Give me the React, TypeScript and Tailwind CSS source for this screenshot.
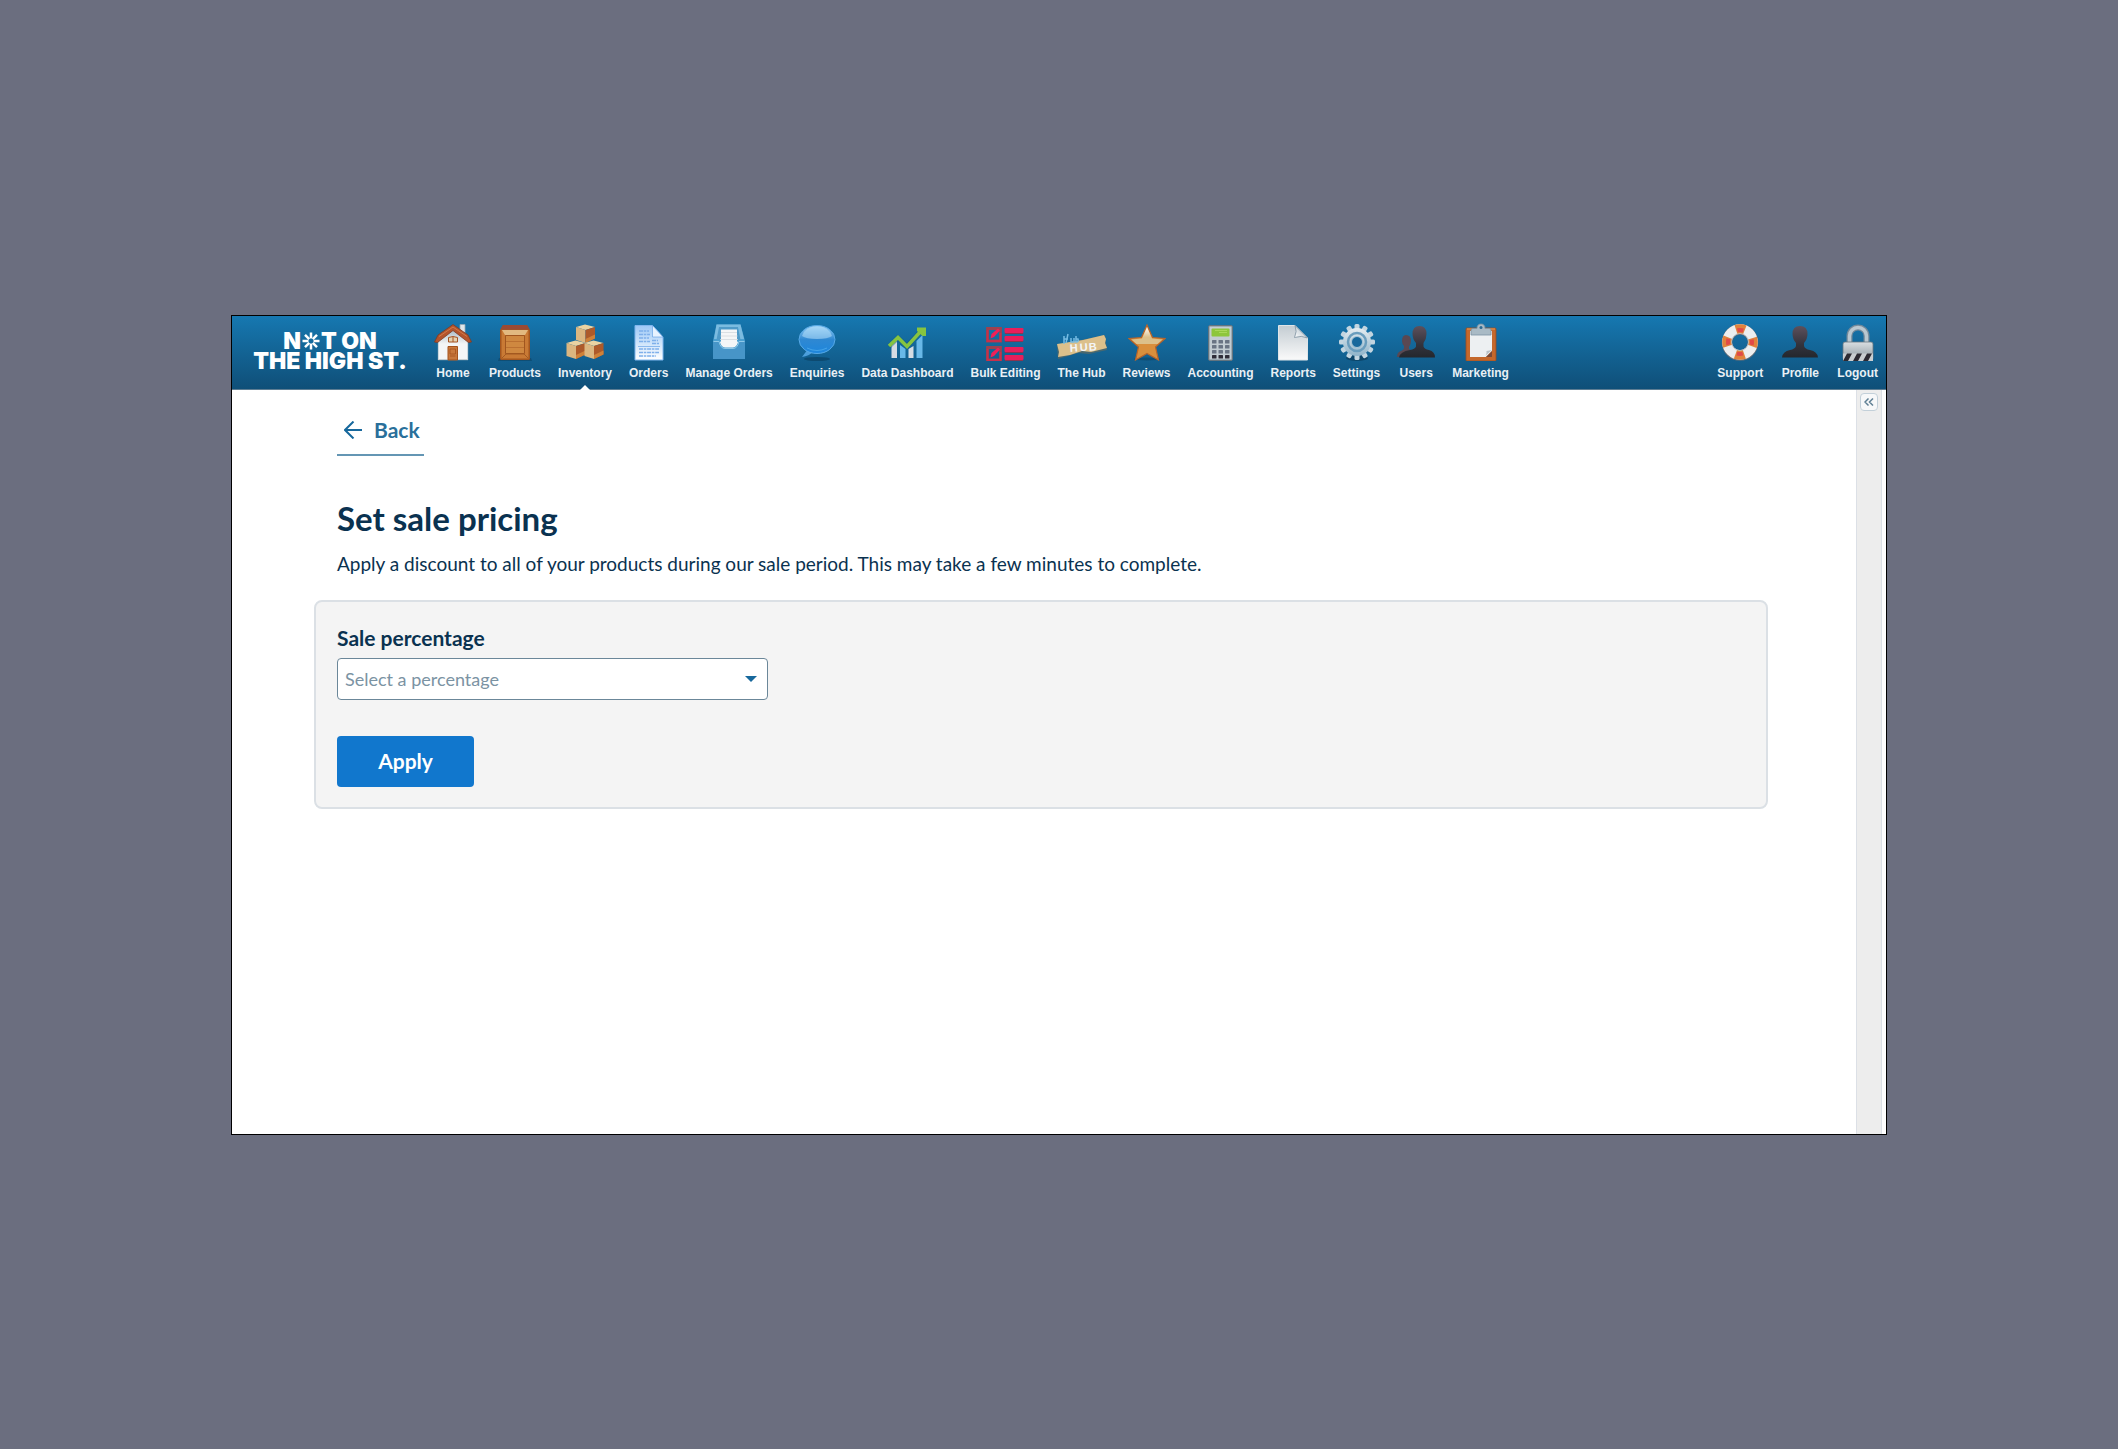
import React from 'react';

const HomeIcon = () => (
  <svg viewBox="0 0 38 38" className="h-[38px] w-[38px]">
    <defs>
      <linearGradient id="home-wall" x1="0" y1="0" x2="0" y2="1">
        <stop offset="0" stopColor="#9fb2be" />
        <stop offset="0.5" stopColor="#f4f6f7" />
      </linearGradient>
    </defs>
    <path d="M26 1.500h5v10h-5z" fill="#dfe6ea" stroke="#93a7b4" strokeWidth="0.800" />
    <path d="M4 17 19 5l15 12v20H4z" fill="url(#home-wall)" stroke="#6f93a8" strokeWidth="0.600" />
    <path d="M.5 19 4 12 19 1.500 34 12l3.500 7-3 .5L19 7.500 3.500 19.500z" fill="#b4542c" stroke="#7e3a22" strokeWidth="0.800" />
    <path d="M5 13.500 19 4l14 9.500" fill="none" stroke="#d07a4a" />
    <path d="M14.500 14.500q4.500-2 9 0V19h-9z" fill="#e4d2b0" stroke="#a65222" />
    <path d="M19 14v5" stroke="#a65222" />
    <path d="M14 23.500h9.500V37H14z" fill="#c8783c" stroke="#a4521c" />
    <path d="M16 26h5.500v5H16zM16 33h5.500" fill="none" stroke="#a4521c" strokeWidth="0.800" />
    <path d="M4 36.500h9M25 36.500h9" stroke="#c6ced2" />
  </svg>
);

const ProductsIcon = () => (
  <svg viewBox="0 0 38 38" className="h-[38px] w-[38px]">
    <path d="M3 35h32l1 3H2z" fill="#0c3d5c" opacity="0.500" />
    <path d="M7 2h24l3 5v28.500q0 1.500-1.500 1.500h-27Q4 37 4 35.500V7z" fill="#a4561f" />
    <path d="M7 2h24l2.500 4.500h-29z" fill="#9a4a34" />
    <path d="M5.500 7h27v28.500h-27z" fill="#c97a35" />
    <path d="M6 7h26l-3 5H9z" fill="#e2b980" />
    <path d="M9.500 12.500h19v18h-19z" fill="#cf8840" stroke="#a0561f" />
    <path d="M10 18.500h18M10 24.500h18" stroke="#bb7031" />
    <path d="M6 35l4-4h18l4 4" fill="none" stroke="#a45a22" />
  </svg>
);

const Box = ({ x, y }: { x: number; y: number }) => (
  <g transform={`translate(${x} ${y})`}>
    <path d="M0 2.500 9 0l10 2.500L9.500 5.500z" fill="#ead3a2" />
    <path d="M0 2.500 9.500 5.500v13L0 15.500z" fill="#dbb680" />
    <path d="M9.500 5.500 19 2.500V14l-9.500 4.500z" fill="#ad5a2a" />
    <path d="M9.500 14.500 19 10v4l-9.500 4.500z" fill="#cf8138" />
  </g>
);

const InventoryIcon = () => (
  <svg viewBox="0 0 38 38" className="h-[38px] w-[38px]">
    <Box x={10} y={1.500} />
    <Box x={0.500} y={17.500} />
    <Box x={18.500} y={17.500} />
  </svg>
);

const OrdersIcon = () => (
  <svg viewBox="0 0 38 38" className="h-[38px] w-[38px]">
    <defs>
      <linearGradient id="orders-page" x1="0" y1="0" x2="0" y2="1">
        <stop offset="0" stopColor="#9cc8f6" />
        <stop offset="1" stopColor="#ffffff" />
      </linearGradient>
    </defs>
    <path d="M5 2.500h17.500L33 14v23H5z" fill="url(#orders-page)" stroke="#7fb6ee" />
    <path d="M22.500 2.500 33 14H22.500z" fill="#e8f3ff" stroke="#5a9be0" strokeWidth="0.600" />
    <path
      d="M9 8h10M9 11.500h11M9 15h10m3 2.500h6M9 18.500h11m2 2h7M9 26h20M9 29.500h20M9 33h17"
      stroke="#7fb0ea"
      strokeWidth="1.600"
      strokeDasharray="4 0.800 2.500 0.800"
    />
    <path d="M8 23.500h22" stroke="#8bb9ee" />
  </svg>
);

const ManageOrdersIcon = () => (
  <svg viewBox="0 0 38 38" className="h-[38px] w-[38px]">
    <path d="M6.500 1.500h24L35 18v18H3V18z" fill="#4a9fd0" />
    <path d="M6.500 1.500h24L34 16H4z" fill="#7bbbe0" />
    <path d="M9 4h19l2.500 13h-24z" fill="#4f9ac8" />
    <path d="M11 6.500h16V18l1 1.500q-2 5-5 5h-8q-3 0-5-5l1-1.500z" fill="#f5f6f7" />
    <path d="M11 9.500h16M10.500 13h17M10 16.500h18" stroke="#d3d9dd" strokeWidth="0.800" />
    <path d="M3 18h6q1.500 7 6 7h8q4.500 0 6-7h6v18H3z" fill="#4795c8" />
    <path d="M3.500 18.500H9q1.500 7 6 7h8q4.500 0 6-7h5.500" fill="none" stroke="#8fc8e8" />
  </svg>
);

const EnquiriesIcon = () => (
  <svg viewBox="0 0 38 38" className="h-[38px] w-[38px]">
    <defs>
      <linearGradient id="enq-bubble" x1="0" y1="0" x2="0" y2="1">
        <stop offset="0" stopColor="#9ad2f6" />
        <stop offset="0.500" stopColor="#2f88d2" />
        <stop offset="1" stopColor="#1d86dc" />
      </linearGradient>
    </defs>
    <ellipse cx="19" cy="36" rx="13" ry="2" fill="#0b4164" opacity="0.700" />
    <path d="M10 26 4 34q7-1 11-5z" fill="#4c9fdc" />
    <ellipse cx="19" cy="16.500" rx="18" ry="14" fill="url(#enq-bubble)" stroke="#57a9e6" />
    <path d="M4 13q3-9.500 15-9.500T34 13q-4 3-15 3T4 13z" fill="#b4defa" opacity="0.550" />
    <path d="M9 25q10 5 20 0" fill="none" stroke="#45a4e8" />
  </svg>
);

const DashboardIcon = () => (
  <svg viewBox="0 0 38 38" className="h-[38px] w-[38px]">
    <path d="M3.500 23 9 18v17H3.500zM20.500 26l5-3v12h-5z" fill="#d5dce3" />
    <path d="M12 22l5.500 4v9H12zM28.500 18l6-6v23h-6z" fill="#68b8e8" />
    <path d="M1 23.500 10 15l9 8L32 9" fill="none" stroke="#0e4f7a" strokeWidth="5" opacity="0.300" />
    <path d="M1 23 10 14.500l9 9L33 8" fill="none" stroke="#86c440" strokeWidth="3.500" />
    <path d="M29 4.500h9V13h-3.500L29 8z" fill="#86c440" />
  </svg>
);

const BulkEditingIcon = () => (
  <svg viewBox="0 0 38 38" className="h-[38px] w-[38px]">
    {[4, 23].map((y) => (
      <g key={y} transform={`translate(0 ${y})`}>
        <path d="M1.500 1.500h13V14h-13z" fill="none" stroke="#9c4250" strokeWidth="2.800" />
        <path d="M1.500 3V14h13V6" fill="none" stroke="#c8304c" strokeWidth="1.800" />
        <path d="m4.500 11.500 1-4.500L12 1.500l2 2L8 10z" fill="#f02058" />
        <rect x="18.500" y="1" width="19" height="5" rx="1" fill="#e81e5b" />
        <rect x="18.500" y="9" width="19" height="5" rx="1" fill="#e81e5b" />
        <path d="M19 6.500h18M19 14.500h18" stroke="#8b3450" />
      </g>
    ))}
  </svg>
);

const HubIcon = () => (
  <svg viewBox="0 0 51 38" className="-mx-2 h-[38px] w-[51px]">
    <path d="M1 22 49 12l2 15-18 4-11-1-20 6z" fill="#6c6a58" opacity="0.600" />
    <path d="M1 21 27 17l21-5 2 4-1 4 2 5-16 4-9-1-12 4-12 2 1-5z" fill="#dcc08b" />
    <text
      x="14"
      y="29"
      fontSize="11"
      fontWeight="700"
      fill="#f4f6f8"
      transform="rotate(-4 14 29)"
      fontFamily="Liberation Sans, sans-serif"
    >
      <tspan x="14">H</tspan>
      <tspan x="24">U</tspan>
      <tspan x="33">B</tspan>
    </text>
    <path d="M8 13v8M12 11l-2 9m-2-4h4M15 15v4h3v-4M20 13v6q3 0 2-3h-2" fill="none" stroke="#75bce4" strokeWidth="1.500" />
  </svg>
);

const ReviewsIcon = () => (
  <svg viewBox="0 0 38 38" className="h-[38px] w-[38px]">
    <defs>
      <linearGradient id="star-shine" x1="0" y1="0" x2="0" y2="1">
        <stop offset="0" stopColor="#ffffff" />
        <stop offset="0.600" stopColor="#dcc08a" />
      </linearGradient>
    </defs>
    <ellipse cx="19" cy="36" rx="13" ry="1.500" fill="#0b3d5c" opacity="0.500" />
    <path
      d="m19 2 5.500 12.500L37 15.500 27.500 24l3 13L19 30.500 7.500 37l3-13L1 15.500l12.500-1z"
      fill="#d98f3c"
      stroke="#b8642a"
      strokeWidth="1.200"
    />
    <path d="m19 4 5 11.500 10.500 1-5 4.500h-21l-5-4.500 10.500-1z" fill="url(#star-shine)" />
  </svg>
);

const AccountingIcon = () => (
  <svg viewBox="0 0 38 38" className="h-[38px] w-[38px]">
    <rect x="6.500" y="2.500" width="24" height="35" rx="1.500" fill="#9eabb3" stroke="#63747f" />
    <rect x="8" y="4" width="21" height="32" fill="#c3ccd2" />
    <rect x="9.500" y="5.500" width="18" height="8" rx="1" fill="#8dc63c" />
    <path d="M13 7.500h12M17 9.500h8" stroke="#a9d85a" />
    {[17, 22, 27, 32].map((y) => (
      <g key={y} fill={y === 32 ? '#2f2c38' : '#6a7484'}>
        <rect x="10" y={y} width="4.500" height="3.500" rx="0.500" />
        <rect x="16.500" y={y} width="4.500" height="3.500" rx="0.500" />
        <rect x="23" y={y} width="4.500" height="3.500" rx="0.500" />
      </g>
    ))}
  </svg>
);

const ReportsIcon = () => (
  <svg viewBox="0 0 38 38" className="h-[38px] w-[38px]">
    <defs>
      <linearGradient id="report-page" x1="0" y1="0" x2="0" y2="1">
        <stop offset="0" stopColor="#c3ccd2" />
        <stop offset="1" stopColor="#fafafa" />
      </linearGradient>
      <linearGradient id="report-fold" x1="0" y1="1" x2="1" y2="0">
        <stop offset="0" stopColor="#ffffff" />
        <stop offset="1" stopColor="#9fb0bb" />
      </linearGradient>
    </defs>
    <path d="M4.500 2.500H21L33.500 15v22h-29z" fill="url(#report-page)" stroke="#dfe5e8" />
    <path d="M21 2.500q2.500 6-.5 12 7-2.500 13 .5z" fill="url(#report-fold)" stroke="#74899a" strokeWidth="0.700" />
  </svg>
);

const SettingsIcon = () => (
  <svg viewBox="0 0 38 38" className="h-[38px] w-[38px]">
    <defs>
      <linearGradient id="gear-metal" x1="0" y1="0" x2="0" y2="1">
        <stop offset="0" stopColor="#e6edf1" />
        <stop offset="1" stopColor="#8fb3c9" />
      </linearGradient>
    </defs>
    <ellipse cx="19" cy="35" rx="11" ry="3" fill="#0a3552" opacity="0.600" />
    {[0, 30, 60, 90, 120, 150].map((deg) => (
      <rect key={deg} x="16.500" y="1" width="5" height="36" rx="1.500" fill="#c3d5e0" transform={`rotate(${deg} 19 19)`} />
    ))}
    <circle cx="19" cy="19" r="14" fill="url(#gear-metal)" />
    <circle cx="19" cy="19" r="9" fill="none" stroke="#6a9dbd" strokeWidth="2.500" />
    <circle cx="19" cy="19" r="5.500" fill="#17689c" stroke="#a9c7d8" />
  </svg>
);

const ProfileIcon = () => (
  <svg viewBox="0 0 38 38" className="h-[38px] w-[38px]">
    <defs>
      <linearGradient id="person-dark" x1="0" y1="0" x2="0" y2="1">
        <stop offset="0" stopColor="#5d505c" />
        <stop offset="0.600" stopColor="#33333c" />
        <stop offset="1" stopColor="#24272d" />
      </linearGradient>
    </defs>
    <path
      d="M19 3q7.500 0 7.500 8 0 5-3.500 9v3q1 3 6 4 7.500 1.500 8 7.500H1Q1.500 28.500 9 27q5-1 6-4v-3q-3.500-4-3.500-9Q11.500 3 19 3z"
      fill="url(#person-dark)"
    />
  </svg>
);

const UsersIcon = () => (
  <svg viewBox="0 0 38 38" className="h-[38px] w-[38px]">
    <defs>
      <linearGradient id="users-dark" x1="0" y1="0" x2="0" y2="1">
        <stop offset="0" stopColor="#5d505c" />
        <stop offset="0.600" stopColor="#33333c" />
        <stop offset="1" stopColor="#24272d" />
      </linearGradient>
    </defs>
    <path d="M9 12q5 0 5 6 0 3-2 6v2q2 2 6 2v6H0q0-5 4-6 3-1 3-3v-2q-2-2-2-5 0-6 4-6z" fill="#5a4852" />
    <path
      d="M22.500 3q7 0 7 8 0 5-3 9v3.500q1 2.500 5.500 3.500 6 1.500 6 7.500H2Q3 28.500 13 27q5-1 6-3.500V20q-3.500-4-3.500-9 0-8 7-8z"
      fill="url(#users-dark)"
    />
  </svg>
);

const MarketingIcon = () => (
  <svg viewBox="0 0 38 38" className="h-[38px] w-[38px]">
    <rect x="4" y="5" width="30" height="33" rx="1" fill="#c4682c" stroke="#9a4b20" strokeWidth="0.800" />
    <path d="M5 6h28" stroke="#e29a58" />
    <path d="M8 8h22v20l-6 6H8z" fill="#edf0f2" />
    <path d="m30 27-8 7q3-2 2.500-6z" fill="#b9c1c6" />
    <path d="M30 28v6h-6z" fill="#7a4a38" />
    <path d="M9 12V7q0-1.500 2-1.500h4Q15 1 19 1t4 4.500h4q2 0 2 1.500v5z" fill="#a9bac5" stroke="#7c93a3" strokeWidth="0.800" />
    <circle cx="19" cy="4.500" r="1.500" fill="#2a6a94" />
  </svg>
);

const SupportIcon = () => (
  <svg viewBox="0 0 38 38" className="h-[38px] w-[38px]">
    <circle cx="19" cy="19.500" r="13" fill="none" stroke="#5f6c78" strokeWidth="10.500" />
    <circle cx="19" cy="19" r="13" fill="none" stroke="#eceeef" strokeWidth="9.500" />
    <circle
      cx="19"
      cy="19"
      r="13"
      fill="none"
      stroke="#e0823c"
      strokeWidth="9.500"
      strokeDasharray="9 11.420"
      strokeDashoffset="4.500"
    />
    <circle
      cx="19"
      cy="19"
      r="12"
      fill="none"
      stroke="#e04a48"
      strokeWidth="4"
      strokeDasharray="6 12.850"
      strokeDashoffset="3"
    />
    <circle cx="19" cy="19" r="8.500" fill="none" stroke="#b9bfc4" strokeWidth="0.800" />
  </svg>
);

const LogoutIcon = () => (
  <svg viewBox="0 0 38 38" className="h-[38px] w-[38px]">
    <defs>
      <linearGradient id="lock-body" x1="0" y1="0" x2="0" y2="1">
        <stop offset="0" stopColor="#d9dee1" />
        <stop offset="1" stopColor="#8f9ba3" />
      </linearGradient>
    </defs>
    <path d="M10.500 21v-8a8.500 8.500 0 0 1 17 0v8" fill="none" stroke="#73899a" strokeWidth="6" />
    <path d="M10.500 21v-8a8.500 8.500 0 0 1 17 0v8" fill="none" stroke="#b9c7d0" strokeWidth="3.500" />
    <rect x="4" y="19" width="30" height="18" rx="2" fill="url(#lock-body)" stroke="#687680" strokeWidth="0.800" />
    <path d="M4 30.500h30V38H4z" fill="#c9cdd0" />
    <path d="m4 38 4-7.500h5L9 38zM14 38l4-7.500h5L19 38zM24 38l4-7.500h5L29 38z" fill="#2d2b33" />
  </svg>
);

const mainNav = [
  { label: 'Home', Icon: HomeIcon },
  { label: 'Products', Icon: ProductsIcon },
  { label: 'Inventory', Icon: InventoryIcon, active: true },
  { label: 'Orders', Icon: OrdersIcon },
  { label: 'Manage Orders', Icon: ManageOrdersIcon },
  { label: 'Enquiries', Icon: EnquiriesIcon },
  { label: 'Data Dashboard', Icon: DashboardIcon },
  { label: 'Bulk Editing', Icon: BulkEditingIcon },
  { label: 'The Hub', Icon: HubIcon },
  { label: 'Reviews', Icon: ReviewsIcon },
  { label: 'Accounting', Icon: AccountingIcon },
  { label: 'Reports', Icon: ReportsIcon },
  { label: 'Settings', Icon: SettingsIcon },
  { label: 'Users', Icon: UsersIcon },
  { label: 'Marketing', Icon: MarketingIcon },
];

const accountNav = [
  { label: 'Support', Icon: SupportIcon },
  { label: 'Profile', Icon: ProfileIcon },
  { label: 'Logout', Icon: LogoutIcon },
];

interface NavItemProps {
  label: string;
  Icon: React.FC;
  active?: boolean;
}

const NavItem: React.FC<NavItemProps> = ({ label, Icon, active }) => (
  <a
    href="#"
    aria-current={active ? 'page' : undefined}
    className="relative flex min-w-9 flex-col items-center gap-1 pt-[7px] pb-2 font-['Liberation_Sans',Arial,sans-serif] text-xs leading-4 font-bold whitespace-nowrap text-[#e9f0f5]"
  >
    <Icon />
    {label}
    {active && (
      <svg viewBox="0 0 10 5" className="absolute -bottom-px left-1/2 h-[5px] w-2.5 -translate-x-1/2">
        <path d="M0 5 5 0l5 5z" fill="#ffffff" />
      </svg>
    )}
  </a>
);

const Logo = () => (
  <a
    href="#"
    aria-label="Not on the high street"
    className="flex w-[152px] flex-col items-center pt-[15px] font-['Inter',sans-serif] text-[23px] leading-5 font-black whitespace-nowrap text-white"
  >
    <span className="flex items-center">
      N
      <svg viewBox="0 0 20 20" className="h-5 w-5">
        <g stroke="#ffffff" strokeWidth="2.500">
          {[0, 45, 90, 135, 180, 225, 270, 315].map((deg) => (
            <path key={deg} d="M10 1.500v6" transform={`rotate(${deg} 10 10)`} />
          ))}
        </g>
      </svg>
      T ON
    </span>
    <span>THE HIGH ST.</span>
  </a>
);

const Header = () => (
  <header className="flex border-b border-[#5d7d93] bg-linear-to-b from-[#1678b1] to-[#0f4f78] pr-2 pl-[22px]">
    <Logo />
    <nav className="ml-7 flex gap-[17px]">
      {mainNav.map((item) => (
        <NavItem key={item.label} {...item} />
      ))}
    </nav>
    <nav className="ml-auto flex gap-[18px]">
      {accountNav.map((item) => (
        <NavItem key={item.label} {...item} />
      ))}
    </nav>
  </header>
);

const SalePricingForm = () => (
  <form
    className="mt-[22px] rounded-lg border-2 border-[#dbe0e5] bg-[#f4f4f4] px-[21px] pt-6 pb-5"
    onSubmit={(e) => e.preventDefault()}
  >
    <label htmlFor="sale-percentage" className="block text-[21px] leading-6 font-bold">
      Sale percentage
    </label>
    <div className="relative mt-2 max-w-[431px]">
      <select
        id="sale-percentage"
        defaultValue=""
        className="block h-[42px] w-full appearance-none rounded border border-[#6b8799] bg-white pr-8 pl-[7px] text-lg text-[#7b93a3]"
      >
        <option value="">Select a percentage</option>
        <option value="10">10%</option>
        <option value="15">15%</option>
        <option value="20">20%</option>
        <option value="25">25%</option>
      </select>
      <svg viewBox="0 0 12 6" className="pointer-events-none absolute top-[18px] right-[11px] h-1.5 w-3">
        <path d="M0 0h12L6 6z" fill="#17689c" />
      </svg>
    </div>
    <button type="submit" className="mt-9 block h-[51px] w-[137px] rounded bg-[#1177cd] text-[21px] font-bold text-white">
      Apply
    </button>
  </form>
);

export default function App() {
  return (
    <div className="flex min-h-screen flex-col justify-center bg-[#6b6e7f] px-[231px] font-['Lato',sans-serif]">
      <div className="flex min-h-[820px] flex-col border border-black bg-white text-[#0a3250]">
        <Header />
        <div className="flex grow pr-1">
          <main className="grow pt-6 pr-[88px] pl-[82px]">
            <div className="pl-[23px]">
              <a
                href="#"
                className="inline-flex items-center gap-3 border-b-2 border-[#6496b4] pr-1 pb-2 pl-[7px] text-[21px] leading-8 font-bold text-[#2a6f9a]"
              >
                <svg viewBox="0 0 18 18" className="h-[18px] w-[18px]" fill="none" stroke="#17689c" strokeWidth="2">
                  <path d="M18 9H1.500M9.500 .500 1 9l8.500 8.500" />
                </svg>
                Back
              </a>
              <h1 className="mt-10 text-[33px] leading-11 font-bold">Set sale pricing</h1>
              <p className="mt-2.5 text-[19px] leading-7">
                Apply a discount to all of your products during our sale period. This may take a few minutes to complete.
              </p>
            </div>
            <SalePricingForm />
          </main>
          <aside className="w-[26px] shrink-0 border-x border-[#dce0e6] bg-[#ededed] pt-[3px]">
            <button
              type="button"
              aria-label="Collapse sidebar"
              className="mx-auto flex h-[18px] w-[18px] items-center justify-center rounded border border-[#c3d0d9] bg-[#f7f8f9]"
            >
              <svg viewBox="0 0 10 8" className="h-2 w-2.5" fill="none" stroke="#5f7f94" strokeWidth="1.500">
                <path d="M4.500 .500 1 4l3.500 3.500M9 .500 5.500 4 9 7.500" />
              </svg>
            </button>
          </aside>
        </div>
      </div>
    </div>
  );
}
